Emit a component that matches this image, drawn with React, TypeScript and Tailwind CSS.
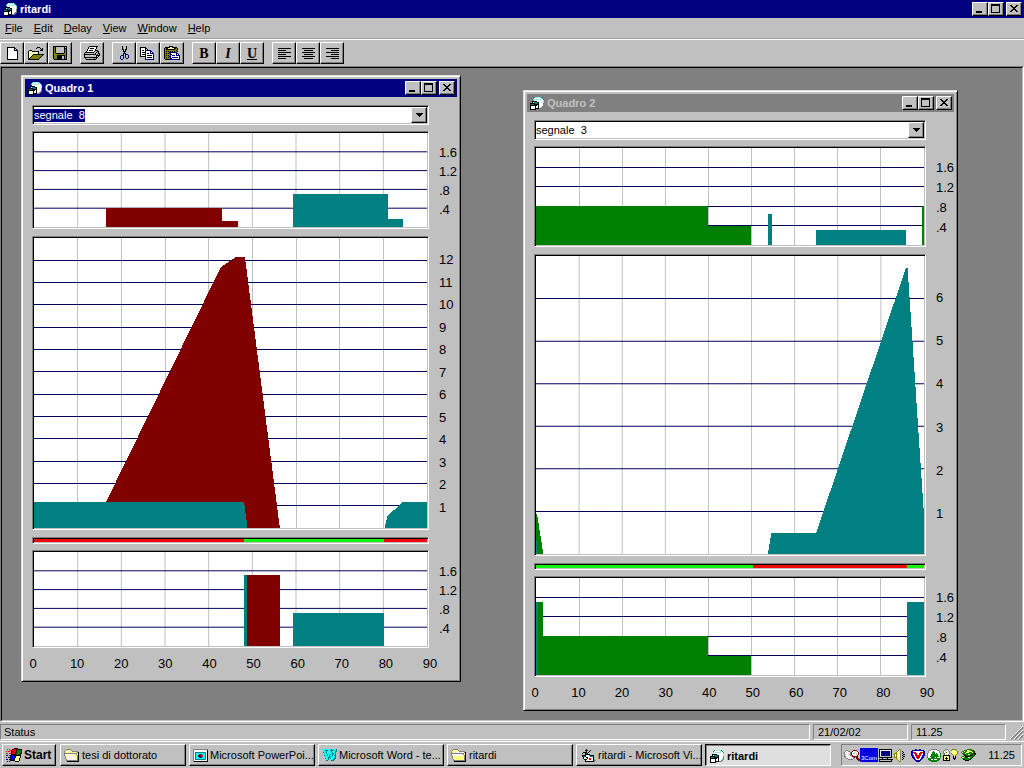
import type { ReactNode } from 'react'

type Point = [number, number]

interface Shape {
  color: string
  points: Point[]
}

interface Phase {
  color: string
  from: number
  to: number
}

const RED = '#800000'
const TEAL = '#008080'
const GREEN = '#008000'
const STOP = '#f00808'
const GO = '#10f410'

const raised =
  'bg-[#c0c0c0] border border-t-white border-l-white border-b-black border-r-black shadow-[inset_-1px_-1px_0_#808080]'
const sunken =
  'border border-t-[#808080] border-l-[#808080] border-b-white border-r-white p-px shadow-[inset_1px_1px_0_#000,inset_-1px_-1px_0_#c0c0c0]'
const thinSunken = 'border border-t-[#808080] border-l-[#808080] border-b-white border-r-white'

const bar = (color: string, from: number, to: number, value: number): Shape => ({
  color,
  points: [[from, 0], [from, value], [to, value], [to, 0]],
})

const quadro1 = {
  arrivals: [
    bar(RED, 16.5, 43, 0.4),
    bar(RED, 43, 46.7, 0.13),
    bar(TEAL, 59.3, 81.1, 0.7),
    bar(TEAL, 81.1, 84.5, 0.17),
  ],
  queue: [
    { color: RED, points: [[16, 0], [16.5, 1.17], [42.8, 11.7], [46.3, 12.15], [48.3, 12.15], [56.3, 0]] },
    { color: TEAL, points: [[0, 0], [0, 1.17], [48.1, 1.17], [48.9, 0]] },
    { color: TEAL, points: [[80.3, 0], [81, 0.55], [84.5, 1.17], [90, 1.17], [90, 0]] },
  ] as Shape[],
  phases: [
    { color: STOP, from: 0, to: 48.1 },
    { color: GO, from: 48.1, to: 80.1 },
    { color: STOP, from: 80.1, to: 90 },
  ],
  departures: [bar(TEAL, 48.1, 48.8, 1.51), bar(RED, 48.8, 56.3, 1.51), bar(TEAL, 59.3, 80.1, 0.7)],
}

const quadro2 = {
  arrivals: [
    bar(GREEN, 0, 40, 0.8),
    bar(GREEN, 40, 49.9, 0.4),
    bar(TEAL, 53.8, 54.8, 0.64),
    bar(TEAL, 65, 85.8, 0.31),
    bar(GREEN, 89.6, 90, 0.8),
  ],
  queue: [
    { color: GREEN, points: [[0, 0], [0, 0.95], [0.3, 0.9], [1.7, 0]] },
    { color: TEAL, points: [[0, 0], [0, 0.4], [0.5, 0]] },
    {
      color: TEAL,
      points: [[53.8, 0], [54.6, 0.5], [65, 0.5], [85.8, 6.72], [86.2, 6.72], [90, 0.9], [90, 0]],
    },
  ] as Shape[],
  phases: [
    { color: GO, from: 0, to: 50.3 },
    { color: STOP, from: 50.3, to: 86 },
    { color: GO, from: 86, to: 90 },
  ],
  departures: [
    bar(GREEN, 0, 1.7, 1.51),
    bar(GREEN, 1.7, 40, 0.8),
    bar(GREEN, 40, 49.9, 0.4),
    bar(TEAL, 0, 0.4, 1.51),
    bar(TEAL, 86, 90, 1.51),
  ],
}

const flowLabels = ['1.6', '1.2', '.8', '.4']
const seconds = [0, 10, 20, 30, 40, 50, 60, 70, 80, 90]

const palette: Record<string, string> = {
  k: '#000000',
  w: '#ffffff',
  y: '#ffff80',
  o: '#808000',
  b: '#000080',
  B: '#0000ff',
  c: '#00ffff',
  a: '#a0e8e8',
  t: '#008080',
  g: '#808080',
  l: '#c0c0c0',
  r: '#e00000',
  m: '#800000',
  G: '#008000',
}

const bitmaps = {
  fresh: [
    'kkkkkkkk...', 'kwwwwwwkk..', 'kwwwwwwkwk.', 'kwwwwwwkkkk', 'kwwwwwwwwwk', 'kwwwwwwwwwk', 'kwwwwwwwwwk',
    'kwwwwwwwwwk', 'kwwwwwwwwwk', 'kwwwwwwwwwk', 'kwwwwwwwwwk', 'kwwwwwwwwwk', 'kkkkkkkkkkk',
  ],
  open: [
    '.........kkk....', '........k...k.k.', '.............kk.', '.kkk........kkk.', 'kywykkkkkkk.....',
    'kwywywywywk.....', 'kywywywywyk.....', 'kwywykkkkkkkkkkk', 'kywykoooooooook.', 'kwykoooooooook..',
    'kykoooooooook...', 'kkoooooooook....', 'kkkkkkkkkkk.....',
  ],
  save: [
    'kkkkkkkkkkkkkk', 'kokllllllllklk', 'kokllllllllkkk', 'kokllllllllkok', 'kokllllllllkok', 'kokllllllllkok',
    'kokllllllllkok', 'kookkkkkkkkook', 'kooooooooooook', 'koookkkkkkkkok', 'koookkkkkllkok', 'koookkkkkllkok',
    'koookkkkkllkok', '.kkkkkkkkkkkkk',
  ],
  print: [
    '.....kkkkkkkkk..', '....kwwwwwwwk...', '....kwkkkkwwk...', '...kwwwwwwwk....', '...kwkkkkwwkkk..',
    '..kwwwwwwwkllkk.', '.kkkkkkkkkllklk.', 'kllllllllllkllkk', 'kkkkkkkkkkkklklk', 'kllllllyylllkkkk',
    'klllllllllllklk.', 'kkkkkkkkkkkkkk..', '.kllllllllklk...', '..kkkkkkkkkk....',
  ],
  cut: [
    '..k...k..', '..k...k..', '..k...k..', '..kk.kk..', '...k.k...', '...kkk...', '....k....', '...bbb...',
    '...b.bbb.', '.bbb.b..b', 'b..b.b..b', 'b..b.b..b', 'b..b..bb.', '.bb......',
  ],
  copy: [
    'kkkkkk..........', 'kwwwwkk.........', 'kwwwwkwk........', 'kwkkwbbbbbb.....', 'kwwwwbwwwwbb....',
    'kwkkkbwwwwbwb...', 'kwwwwbwkkwbbbb..', 'kwkkkbwwwwwwwb..', 'kwwwwbwkkkkkwb..', 'kkkkkbwwwwwwwb..',
    '.....bwkkkkkwb..', '.....bwwwwwwwb..', '.....bbbbbbbbb..',
  ],
  paste: [
    '.....kkkk.......', '.kkkkkyykkkkk...', 'kokkyyyyyykkok..', 'kokkkkkkkkkook..', 'koooooooooooko..',
    'kokokokokokook..', 'kooookbbbbbbb...', 'kokokobwwwwwbb..', 'koooookbwwwwbwb.', 'kokokobwbbbwbbbb',
    'kooookbwwwwwwwwb', 'kokokobwbbbbbbwb', 'koooookbwwwwwwwb', '.kkkkkbbbbbbbbbb',
  ],
  left: [
    'kkkkkkkkkkkkk', '.............', 'kkkkkkkk.....', '.............', 'kkkkkkkkkkkkk', '.............',
    'kkkkkkkk.....', '.............', 'kkkkkkkkkkkkk', '.............', 'kkkkkkkk.....',
  ],
  center: [
    'kkkkkkkkkkkkk', '.............', '..kkkkkkkkk..', '.............', 'kkkkkkkkkkkkk', '.............',
    '..kkkkkkkkk..', '.............', 'kkkkkkkkkkkkk', '.............', '..kkkkkkkkk..',
  ],
  right: [
    'kkkkkkkkkkkkk', '.............', '.....kkkkkkkk', '.............', 'kkkkkkkkkkkkk', '.............',
    '.....kkkkkkkk', '.............', 'kkkkkkkkkkkkk', '.............', '.....kkkkkkkk',
  ],
  form: [
    '....taaaaaat..', '...twwwwwwaat.', '...aaaaaaaawwt', '....wwwwwwwwwa', '..kkkkkwwwwwwa', '..kwtttkkwwwwa',
    'kkkkktttkwwwwg', 'ktttkkkkkwwwwg', 'kkkkkkkwkwwwwg', 'kwwwwkwwkwwwgg', 'kwwwwkwwkwwgg.', 'kwwwwkkkkggg..',
    'kkkkkk........',
  ],
  folder: [
    '..ggggg.........', '.gyyyyyg........', 'gywywywygggggg..', 'gyywywywywywygk.', 'gggggggggggggyk.',
    'gwwwwwwwwwwwgyk.', 'gwywywywywywygk.', '.gwywywywywyygk.', '.gyywywywywyygk.', '.gwywywywywyygk.',
    '..gywywywywyygk.', '..ggggggggggggk.', '...kkkkkkkkkkkk.',
  ],
  slides: [
    'ggggggggggggggg', 'gwwwwwwwwwwwwwk', 'gwwwwwwwwwwwwwk', 'gwttttttttttgwk', 'gwtccccccccctwk', 'gwtcccmmrccctwk',
    'gwtccmmrrrcctwk', 'gwtccmbbrrcctwk', 'gwtcccbbbccctwk', 'gwtccccccccctwk', 'gwttttttttttgwk', 'gwwwwwwwwwwwwwk',
    'gkkkkkkkkkkkkkk',
  ],
  word: [
    'ccccccccctcccct', '.cctttccttttcct', '.ccct.ccct..ctt', '.tcct.cccct.ct.', '..cct.ccccttct.', '..ccctcctctcct.',
    '..tcctctcctctt.', '...ccccttcccct.', '...cccttccccct.', '...tcct.tccctt.', '....cct..cctt..', '....tt...ttt...',
  ],
  basic: [
    '......k.........', '.....kGk..k.....', '......k..k......', '...kkkk.k.......', '..k..kGk........', '.....kkkkk......',
    '..kkkkwwwtkkkk..', '..kttkwwwwtttk..', '...kwwkkwwwwwk..', '...kwwwkwrrwwk..', '....kkkwwrrwwkg.', '.....kwwwwwwwkgg',
    '.....kkkkkkkkkg.',
  ],
  windows: [
    '........kkkk....', '.r.r..kkrrrkkkkk', '....rkrrrrkGGGGk', 'r.rr.krrrrkGGGGk', '.....krrrkkGGGGk', 'rr.rrkrrrkGGGGkk',
    '.....kkkkkkGGGk.', 'bb.bbkBBkkkkkkk.', '....kBBBBkyyyyk.', 'b.bbkBBBBkyyyyk.', '....kBBBkyyyyk..', 'bb.bkBBBkyyyyk..',
    '....kkkkkyyyyk..', '.b.b.....kkkk...',
  ],
  find: [
    '..gg.....mmmm...', '.gwwgg..mwwwwm..', 'gwlwwwgmwwlwwwm.', 'gwwwlwgmwllwlwm.', 'glwwwlgmwwwwlwm.', 'gwwwlwggmwwwwm..',
    'gglwwwwlmmmmmm..', '.gwwwlwwwgk.mm..', '..ggwwwlwg..mmm.', '....ggggg....mmm', '..............mm',
  ],
  monitor: [
    '.kkkkkkkkkkkkk..', '.kwwwwwwwwwwwk..', '.kwbbbbbbbbblk..', '.kwbbbbbbbbblk..', '.kwbbbbbbbbblk..', '.kwbbbbbbbbblk..',
    '.kwbbbbbbbbblk..', '.klllllllllllk..', '.kkkkkkkkkkkkk..', '....kllllk......', '.kkkkkkkkkkkkkk.', '.klllllllllllk..',
    '.kkkkkkkkkkkkk..',
  ],
  speaker: [
    '.....og....', '....oyg....', '...oyyg.k..', '..oyyyg..k.', 'oooyyyg.k..', 'oyoyywg..kk', 'oyoywyg.k..', 'oyoyywg..kk',
    'oooyyyg.k..', '..oyyyg..k.', '...oyyg.k..', '....oyg....', '.....og....',
  ],
  shield: [
    '....bb..bb....', '.bbbBBbbBBbbb.', 'bBwwwwwwwwwwBb', 'bBrrrwwwwrrrBb', 'bBwrrrwwrrrwBb', 'bBwwrrwwrrwwBb', 'bBBwrrrrrrwBBb',
    '.bBwwrrrrwwBb.', '.bBBwrrrrwBBb.', '..bBwwrrwwBb..', '...bBwwwwBb...', '....bBBBBb....', '.....bbbb.....',
  ],
  globe: [
    '....gggggg....', '..ggwwwwwwgg..', '.gwwwwGwwwwwg.', '.gwwwGGGwwwwg.', 'gwwwwGGGwGwwwG', 'gwwwGGGGGGGwwG', 'gwwwGGGGGGGwwG',
    'gwwGGGGGGGGGwG', 'GwwwGGGGwGwwwG', '.GGGGGGGGGGGG.', '.GGGwwGwwwGGG.', '..GGGGGGGGGG..', '....GGGGGG....',
  ],
  power: [
    '..ggg....oooo...', '.gwwyg..oyyyyo..', 'gwcwwyg.yywwyyo.', 'gwwrwwg.yywyyyo.', 'gGwwwwg.oyyyyyo.', '.gwwwg...oyyyo..',
    'kkkkkkk...oyo...', 'kyyyyyk...klk...', 'kyykyyk...klk...', 'kykkkyk...kkk...', 'kyykyyk....k....', 'kkkkkkk.........',
  ],
  card: [
    '......GGGGG.....', '...GGGyyyGGGk...', '.GGyGGyyyyyGGk..', 'GyGGGyyyGGGyGk..', '.GGGyGGGGGGGkkk.', '..kGGGGyyGGkGGk.',
    '...kkGGGGkkGGk..', '.GG.kkkkkGGGk...', 'GyyGGkGyyGGk....', '.GGGGGGGGGk.....', '..kkGGGGkk......', '....kkkk........',
  ],
}

function Pixels({ name }: { name: keyof typeof bitmaps }) {
  const rows = bitmaps[name]
  const width = rows[0].length
  return (
    <svg width={width} height={rows.length} shapeRendering="crispEdges" className="shrink-0" aria-hidden="true">
      {rows.flatMap((row, y) =>
        [...row].map((c, x) =>
          palette[c] ? <rect key={`${x}-${y}`} x={x} y={y} width="1" height="1" fill={palette[c]} /> : null
        )
      )}
    </svg>
  )
}

function CaptionButtons({ title }: { title: string }) {
  return (
    <div className="flex">
      <button type="button" aria-label={`Minimize ${title}`} className={`w-4 h-3.5 ${raised}`}>
        <svg width="14" height="12" shapeRendering="crispEdges">
          <path d="M3 8h6v2H3z" />
        </svg>
      </button>
      <button type="button" aria-label={`Maximize ${title}`} className={`w-4 h-3.5 ${raised}`}>
        <svg width="14" height="12" shapeRendering="crispEdges">
          <path d="M2 1h9v9H2zM3 3v6h7V3z" fillRule="evenodd" />
        </svg>
      </button>
      <button type="button" aria-label={`Close ${title}`} className={`ml-0.5 w-4 h-3.5 ${raised}`}>
        <svg width="14" height="12" shapeRendering="crispEdges">
          <path d="M3 2h2v1h1v1h2V3h1V2h2v1h-1v1H9v1H8v1h1v1h1v1h1v1H9V8H8V7H6v1H5v1H3V8h1V7h1V6h1V5H5V4H4V3H3z" />
        </svg>
      </button>
    </div>
  )
}

function TitleBar({ title, active = true }: { title: string; active?: boolean }) {
  return (
    <div
      className={`flex h-[18px] shrink-0 items-center gap-0.5 px-0.5 ${
        active ? 'bg-[#000080] text-white' : 'bg-[#808080] text-[#c0c0c0]'
      }`}
    >
      <span className="flex w-4 justify-center"><Pixels name="form" /></span>
      <h2 className="grow font-bold">{title}</h2>
      <CaptionButtons title={title} />
    </div>
  )
}

interface ChartProps {
  label: string
  max: number
  step: number
  shapes: Shape[]
}

function Chart({ label, max, step, shapes }: ChartProps) {
  const levels: number[] = []
  for (let v = step; v < max - step / 2; v += step) levels.push(v)

  return (
    <div className={`grow bg-white ${sunken}`}>
      <svg
        role="img"
        aria-label={label}
        viewBox={`0 0 90 ${max}`}
        preserveAspectRatio="none"
        shapeRendering="crispEdges"
        className="block size-full"
      >
        {seconds.slice(1, -1).map((s) => (
          <line key={s} x1={s} x2={s} y1="0" y2={max} stroke="#c0c0c0" vectorEffect="non-scaling-stroke" />
        ))}
        {levels.map((v) => (
          <line key={v} x1="0" x2="90" y1={max - v} y2={max - v} stroke="#000060" vectorEffect="non-scaling-stroke" />
        ))}
        {shapes.map((shape, i) => (
          <polygon key={i} fill={shape.color} points={shape.points.map(([x, y]) => `${x},${max - y}`).join(' ')} />
        ))}
      </svg>
    </div>
  )
}

function Scale({ labels, className }: { labels: string[]; className: string }) {
  return (
    <ul className={`flex w-7 shrink-0 flex-col pl-2.5 text-[13px] ${className}`}>
      {labels.map((l) => <li key={l}>{l}</li>)}
    </ul>
  )
}

function PhaseStrip({ phases }: { phases: Phase[] }) {
  return (
    <div className={`mr-7 h-[7px] ${sunken}`}>
      <div className="flex h-full">
        {phases.map((p) => (
          <div key={p.from} style={{ width: `${((p.to - p.from) / 90) * 100}%`, background: p.color }} />
        ))}
      </div>
    </div>
  )
}

interface QuadroProps {
  title: string
  signal: string
  active?: boolean
  data: typeof quadro1
  max: number
  className: string
  flowHeight: string
  queueHeight: string
  flowScale: string
  queueScale: string
}

function Quadro({
  title, signal, active = false, data, max, className, flowHeight, queueHeight, flowScale, queueScale,
}: QuadroProps) {
  const queueLabels = Array.from({ length: max - 1 }, (_, i) => String(max - 1 - i))

  return (
    <section
      className={`absolute border border-t-[#dfdfdf] border-l-[#dfdfdf] border-b-black border-r-black bg-[#c0c0c0] p-[3px] shadow-[inset_1px_1px_0_#fff,inset_-1px_-1px_0_#808080] ${className}`}
    >
      <TitleBar title={title} active={active} />
      <div className="pl-[7px] pt-2">
        <div className={`mb-1.5 mr-7 flex h-5 items-center bg-white ${sunken}`}>
          <div className="grow leading-[13px]">
            <select
              aria-label={`${title} signal`}
              className={`block appearance-none outline-none [field-sizing:content] ${
                active ? 'bg-[#000080] text-white' : 'bg-white text-black'
              }`}
            >
              <option>{signal}</option>
            </select>
          </div>
          <span className={`pointer-events-none flex h-4 w-4 items-center justify-center ${raised}`}>
            <svg width="7" height="4" shapeRendering="crispEdges">
              <path d="M0 0h7v1H6v1H5v1H4v1H3V3H2V2H1V1H0z" />
            </svg>
          </span>
        </div>
        <div className={`mb-[7px] flex ${flowHeight}`}>
          <Chart label="Arrivals" max={2} step={0.4} shapes={data.arrivals} />
          <Scale labels={flowLabels} className={`pt-3 ${flowScale}`} />
        </div>
        <div className={`mb-[7px] flex ${queueHeight}`}>
          <Chart label="Queue" max={max} step={1} shapes={data.queue} />
          <Scale labels={queueLabels} className={`justify-between leading-[22px] ${queueScale}`} />
        </div>
        <PhaseStrip phases={data.phases} />
        <div className={`mt-1.5 flex ${flowHeight}`}>
          <Chart label="Departures" max={2} step={0.4} shapes={data.departures} />
          <Scale labels={flowLabels} className={`pt-3 ${flowScale}`} />
        </div>
        <ul className="-ml-[15px] mr-[11px] mb-[5px] mt-[7px] flex justify-between text-center text-[13px] leading-[18px]">
          {seconds.map((s) => <li key={s} className="w-8">{s}</li>)}
        </ul>
      </div>
    </section>
  )
}

function ToolButton({ label, children }: { label: string; children: ReactNode }) {
  return (
    <button
      type="button"
      aria-label={label}
      className={`flex h-[22px] w-6 items-center justify-center font-['Liberation_Serif',serif] text-[14px] font-bold ${raised}`}
    >
      {children}
    </button>
  )
}

function Toolbar() {
  return (
    <div role="toolbar" className="flex gap-2 py-0.5">
      <div className="flex">
        <ToolButton label="New"><Pixels name="fresh" /></ToolButton>
        <ToolButton label="Open"><Pixels name="open" /></ToolButton>
        <ToolButton label="Save"><Pixels name="save" /></ToolButton>
      </div>
      <ToolButton label="Print"><Pixels name="print" /></ToolButton>
      <div className="flex">
        <ToolButton label="Cut"><Pixels name="cut" /></ToolButton>
        <ToolButton label="Copy"><Pixels name="copy" /></ToolButton>
        <ToolButton label="Paste"><Pixels name="paste" /></ToolButton>
      </div>
      <div className="flex">
        <ToolButton label="Bold">B</ToolButton>
        <ToolButton label="Italic"><i>I</i></ToolButton>
        <ToolButton label="Underline"><u>U</u></ToolButton>
      </div>
      <div className="flex">
        <ToolButton label="Align left"><Pixels name="left" /></ToolButton>
        <ToolButton label="Center"><Pixels name="center" /></ToolButton>
        <ToolButton label="Align right"><Pixels name="right" /></ToolButton>
      </div>
    </div>
  )
}

const tasks: { icon: keyof typeof bitmaps; text: string }[] = [
  { icon: 'folder', text: 'tesi di dottorato' },
  { icon: 'slides', text: 'Microsoft PowerPoi...' },
  { icon: 'word', text: 'Microsoft Word - te...' },
  { icon: 'folder', text: 'ritardi' },
  { icon: 'basic', text: 'ritardi - Microsoft Vi...' },
]

function Taskbar() {
  return (
    <footer className="flex h-[27px] shrink-0 items-center gap-[3px] border-t border-white px-0.5">
      <button type="button" className={`mr-px flex h-[22px] w-[54px] items-center gap-0.5 pl-[3px] text-[12px] font-bold ${raised}`}>
        <Pixels name="windows" />
        Start
      </button>
      {tasks.map((t, i) => (
        <button
          key={i}
          type="button"
          className={`flex h-[22px] w-[126px] min-w-0 items-center gap-0.5 whitespace-nowrap pl-[3px] ${raised}`}
        >
          <Pixels name={t.icon} />
          {t.text}
        </button>
      ))}
      <button
        type="button"
        aria-pressed="true"
        className="flex h-[22px] w-[126px] min-w-0 items-center gap-[3px] border border-b-white border-l-black border-r-white border-t-black bg-[#dfdfdf] pl-1 pt-0.5 font-bold shadow-[inset_1px_1px_0_#808080]"
      >
        <Pixels name="form" />
        ritardi
      </button>
      <div className={`ml-auto flex h-[22px] w-[181px] items-center pl-0.5 pr-1.5 ${thinSunken}`}>
        <Pixels name="find" />
        <span className="flex h-3.5 w-[18px] items-end justify-center bg-[#0000e0] text-[6px] leading-[8px] text-white">3Com</span>
        <Pixels name="monitor" />
        <Pixels name="speaker" />
        <span className="ml-1.5 flex items-center gap-0.5">
          <Pixels name="shield" />
          <Pixels name="globe" />
          <Pixels name="power" />
          <Pixels name="card" />
        </span>
        <time className="ml-auto">11.25</time>
      </div>
    </footer>
  )
}

const menus = ['File', 'Edit', 'Delay', 'View', 'Window', 'Help']

export default function App() {
  return (
    <div className="flex h-screen min-h-[760px] flex-col bg-[#c0c0c0] font-['Liberation_Sans',Arial,sans-serif] text-[11px] leading-[13px] text-black">
      <TitleBar title="ritardi" />
      <nav className="flex h-[22px] shrink-0 items-center gap-[11px] border-b border-white px-[5px] shadow-[inset_0_-1px_0_#a0a0a0]">
        {menus.map((m) => (
          <button key={m} type="button">
            <span className="underline">{m[0]}</span>{m.slice(1)}
          </button>
        ))}
      </nav>
      <Toolbar />
      <main className="flex grow border border-b-white border-l-[#808080] border-r-white border-t-[#808080]">
        <div className="relative grow overflow-hidden border border-b-[#c0c0c0] border-l-black border-r-[#c0c0c0] border-t-black bg-[#808080]">
          <Quadro
            title="Quadro 1"
            signal={'segnale\u00a0 8'}
            active
            data={quadro1}
            max={13}
            className="left-[19px] top-[7px] w-[440px]"
            flowHeight="h-[98px]"
            queueHeight="h-[294px]"
            flowScale="leading-[19px]"
            queueScale="pb-[11px] pt-[13px]"
          />
          <Quadro
            title="Quadro 2"
            signal={'segnale\u00a0 3'}
            data={quadro2}
            max={7}
            className="left-[521px] top-[22px] w-[435px]"
            flowHeight="h-[101px]"
            queueHeight="h-[302px]"
            flowScale="leading-[20px]"
            queueScale="pb-[31px] pt-[33px]"
          />
        </div>
      </main>
      <div role="status" className="flex h-[19px] shrink-0 gap-[3px] pb-px pt-0.5">
        <div className={`grow px-[3px] pt-px ${thinSunken}`}>Status</div>
        <div className={`w-[95px] px-1 pt-px ${thinSunken}`}>21/02/02</div>
        <div className={`w-[95px] px-1 pt-px ${thinSunken}`}>11.25</div>
        <svg width="15" height="16" viewBox="0 0 15 16" aria-hidden="true">
          <path d="M2 15L14 3M6 15l8-8M10 15l4-4" stroke="#808080" strokeWidth="2" />
          <path d="M1 15L14 2M5 15l9-9M9 15l5-5" stroke="#fff" />
        </svg>
      </div>
      <Taskbar />
    </div>
  )
}
